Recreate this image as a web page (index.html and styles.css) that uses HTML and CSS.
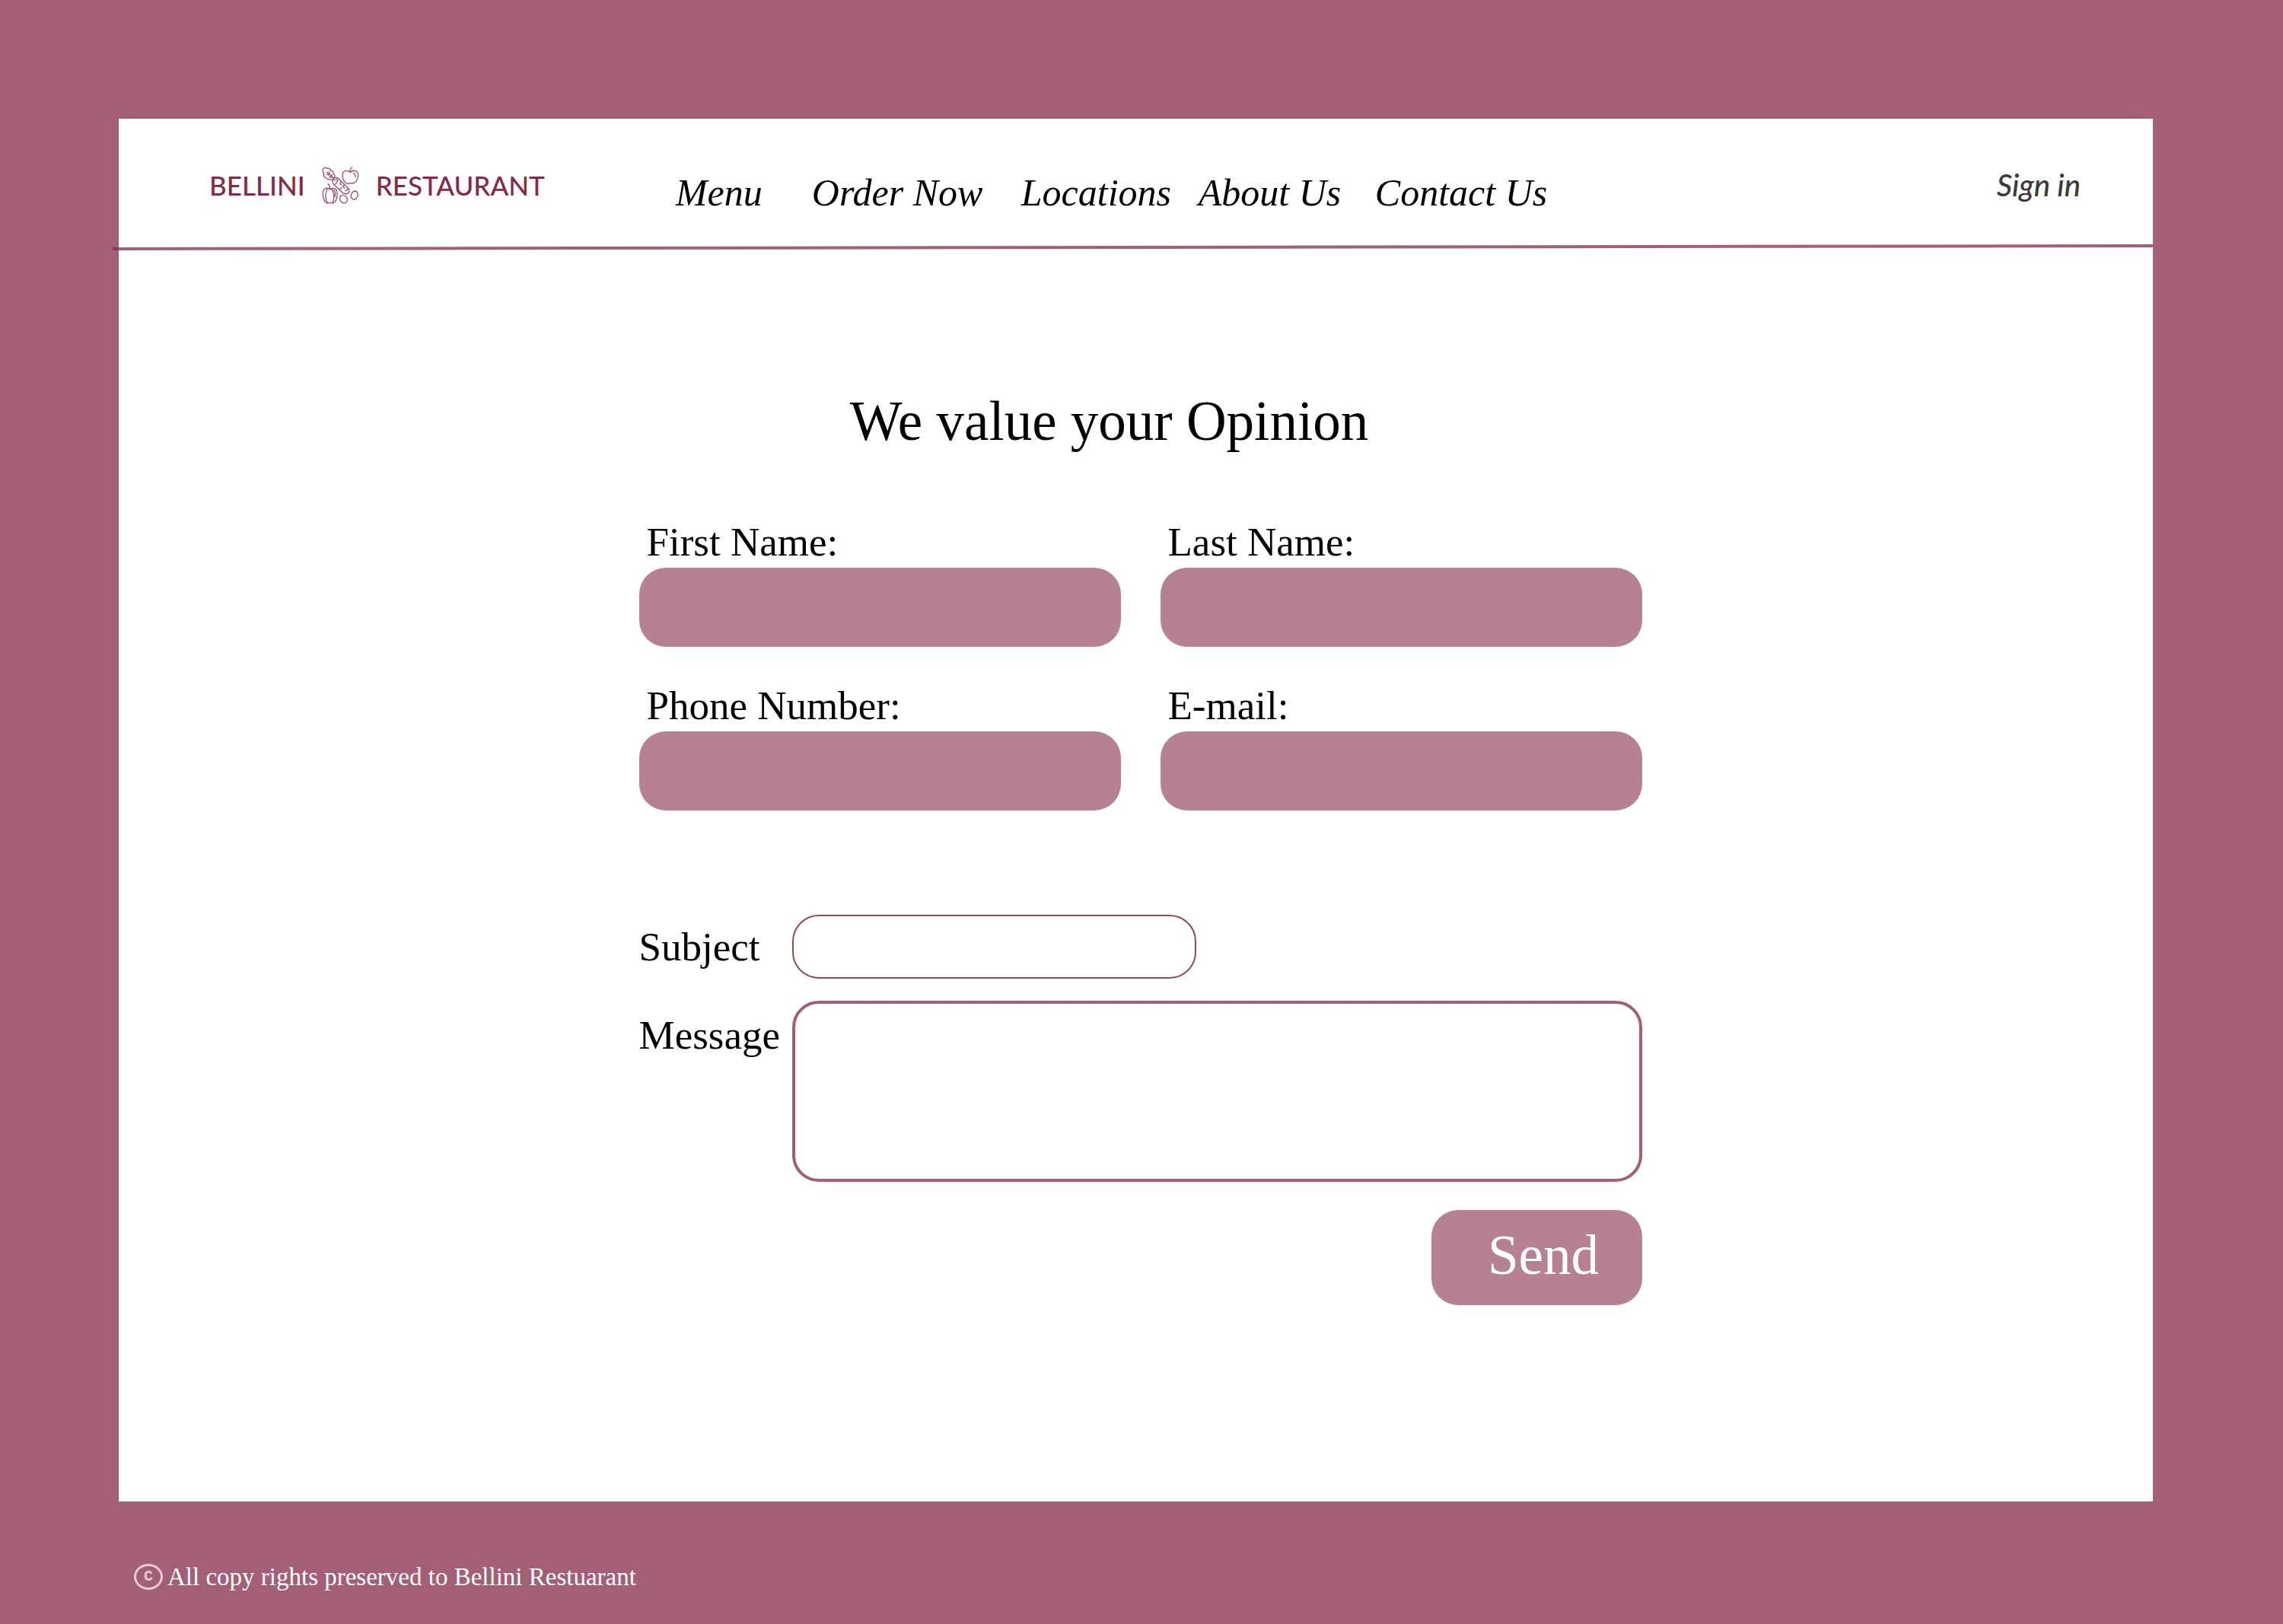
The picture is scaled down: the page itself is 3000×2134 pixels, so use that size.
FILE: index.html
```html
<!DOCTYPE html>
<html lang="en">
<head>
<meta charset="utf-8">
<meta name="viewport" content="width=device-width, initial-scale=1">
<title>Bellini Restaurant - We value your Opinion</title>
<link rel="stylesheet" href="styles.css">
</head>
<body>
<div class="panel">
  <header class="header">
    <a class="logo" href="#">
      <span>BELLINI</span>
      <svg class="logo-icon" viewBox="33 40 147 147" aria-hidden="true">
        <path d="M76 92C66 93 52 89 47 83C39 81 40 71 41 67C33 62 36 54 38 49C40 44 50 42 54 47C61 45 67 49 67 55C75 55 78 62 78 67C85 71 86 78 81 85L76 92M53 62L86 94M62 60L63 72L53 72M72 71L73 82L62 81"/>
        <path d="M79 87Q88 79 99 87L139 128Q144 139 136 145Q127 150 116 144L79 109Q71 98 79 87ZM91 88L97 95L91 101M110 99L104 106L110 112M84 109L91 105M123 111L116 118L122 124M103 129L111 123M136 128L126 135"/>
        <path d="M145 62C134 52 115 55 114 72C113 90 124 107 137 107C142 104 147 104 153 106C166 105 178 87 176 70C173 54 156 52 145 62ZM145 61Q142 50 152 43M157 65Q166 68 165 81"/>
        <path d="M63 129C51 120 37 126 37 144C36 163 42 178 53 184Q65 180 77 184C88 178 94 162 93 145C93 127 77 120 63 129ZM63 127Q66 114 57 108M55 127C44 143 46 170 55 183M71 127C84 143 82 170 75 183M58 126Q65 132 73 126M80 132Q88 141 84 158"/>
        <path d="M112 153C122 151 134 160 133 172C132 184 118 186 111 180C102 174 100 155 112 153Z"/>
        <path d="M163 136C154 137 146 149 148 159C150 170 164 172 170 164C178 154 175 136 163 136Z"/>
      </svg>
      <span>RESTAURANT</span>
    </a>
    <nav class="nav">
      <a href="#">Menu</a>
      <a href="#">Order Now</a>
      <a href="#">Locations</a>
      <a href="#">About Us</a>
      <a href="#">Contact Us</a>
    </nav>
    <a class="sign-in" href="#">Sign in</a>
    <svg class="rule" viewBox="0 0 100 8" preserveAspectRatio="none" aria-hidden="true">
      <polygon points="0,4 100,0 100,4 0,8"/>
    </svg>
  </header>
  <main class="main">
    <form class="form">
      <h1 class="title">We value your Opinion</h1>
      <div class="contact">
        <div class="field">
          <label for="first-name">First Name:</label>
          <input id="first-name" type="text">
        </div>
        <div class="field">
          <label for="last-name">Last Name:</label>
          <input id="last-name" type="text">
        </div>
        <div class="field">
          <label for="phone">Phone Number:</label>
          <input id="phone" type="tel">
        </div>
        <div class="field">
          <label for="email">E-mail:</label>
          <input id="email" type="email">
        </div>
      </div>
      <div class="row row-subject">
        <label for="subject">Subject</label>
        <input class="subject" id="subject" type="text">
      </div>
      <div class="row row-message">
        <label for="message">Message</label>
        <textarea class="message" id="message"></textarea>
      </div>
      <button class="send" type="submit">Send</button>
    </form>
  </main>
</div>
<footer class="footer">
  <span class="copy-mark">C</span>
  <span>All copy rights preserved to Bellini Restuarant</span>
</footer>
</body>
</html>
```
FILE: styles.css
```css
* {
  box-sizing: border-box;
}

body {
  margin: 0;
  min-height: 100vh;
  padding: 156px 171px 0 156px;
  background: #a35f76;
  color: #000;
  font-family: "Liberation Serif", "Times New Roman", serif;
}

a {
  color: inherit;
  text-decoration: none;
}

.panel {
  background: #fff;
}

.header {
  position: relative;
  display: flex;
  align-items: center;
  min-height: 170px;
  padding: 4px 95px 0 119px;
}

.logo {
  display: flex;
  align-items: center;
  gap: 22px;
  color: #842a48;
  font-family: Lato, sans-serif;
  font-size: 35px;
  font-weight: 500;
  line-height: 48px;
}

.logo-icon {
  width: 49px;
  height: 49px;
  fill: none;
  stroke: #99506a;
  stroke-width: 4;
  stroke-linecap: round;
  stroke-linejoin: round;
}

.nav {
  display: grid;
  grid-template-columns: 179px 275px 233px 232px auto;
  margin-left: 172px;
  padding-top: 20px;
  font-size: 50px;
  font-style: italic;
  line-height: 60px;
  white-space: nowrap;
}

.sign-in {
  margin-left: auto;
  color: #3a3a3a;
  font-family: Lato, sans-serif;
  font-size: 40px;
  font-style: italic;
  font-weight: 500;
  line-height: 48px;
}

.rule {
  position: absolute;
  left: -8px;
  bottom: -3px;
  width: calc(100% + 8px);
  height: 8px;
  fill: rgba(132, 42, 72, 0.75);
}

.main {
  padding: 188px 0 258px 12px;
}

.form {
  display: flex;
  flex-direction: column;
  max-width: 1318px;
  margin: 0 auto;
  font-size: 53px;
  line-height: 60px;
}

.title {
  margin: 0 0 88px;
  padding-right: 82px;
  font-size: 73px;
  font-weight: 400;
  line-height: 80px;
  text-align: center;
}

.contact {
  display: grid;
  grid-template-columns: repeat(2, minmax(0, 1fr));
  gap: 47px 52px;
  margin-bottom: 137px;
}

.field {
  display: flex;
  flex-direction: column;
  gap: 4px;
}

.field label {
  padding-left: 10px;
}

input,
textarea {
  display: block;
  min-width: 0;
  margin: 0;
  padding: 0 28px;
  border: 0;
  border-radius: 35px;
  background: #fff;
  font: inherit;
}

.field input {
  width: 100%;
  height: 104px;
  background: #b68192;
}

.row {
  display: grid;
  grid-template-columns: 201px minmax(0, 1fr);
}

.row-subject {
  align-items: center;
  margin-bottom: 29px;
}

.row-message label {
  padding-top: 15px;
}

.subject {
  width: 531px;
  max-width: 100%;
  height: 84px;
  border: 2px solid #924c4c;
}

.message {
  width: 100%;
  height: 238px;
  padding: 20px 28px;
  border: 4px solid #a05f75;
  resize: none;
}

.send {
  align-self: flex-end;
  width: 277px;
  height: 125px;
  margin-top: 37px;
  padding: 0 0 6px 18px;
  border: 0;
  border-radius: 35px;
  background: #b68192;
  color: #fff;
  font: inherit;
  font-size: 73px;
}

.footer {
  display: flex;
  align-items: center;
  gap: 6px;
  padding: 79px 20px 42px;
  color: #fff;
  font-size: 33px;
  line-height: 40px;
}

.copy-mark {
  width: 38px;
  height: 34px;
  border: 3px solid #ecccd6;
  border-radius: 50%;
  color: #ecccd6;
  font-family: "Liberation Mono", monospace;
  font-size: 20px;
  font-weight: 700;
  line-height: 28px;
  text-align: center;
}
```
